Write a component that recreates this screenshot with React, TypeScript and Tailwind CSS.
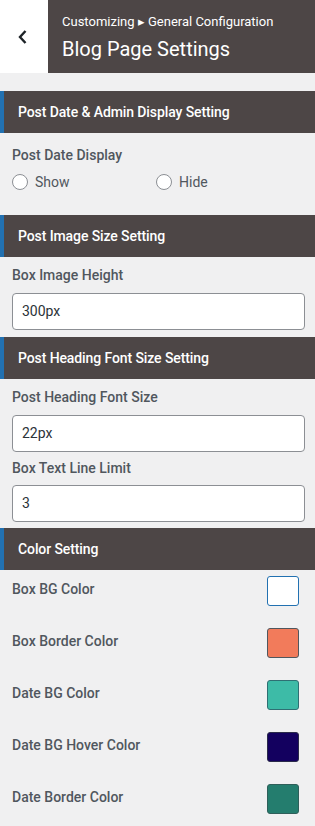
import React from "react";

const font = { fontFamily: "Roboto, 'Noto Sans', sans-serif" };

function SectionHeader({ title }: { title: string }) {
  return (
    <div className="h-[42px] flex items-center bg-[#4d4646] border-l-4 border-[#2271b1] pl-[14px]">
      <span className="text-white text-[14px] font-medium tracking-[-0.1px]">{title}</span>
    </div>
  );
}

function Label({ children, className = "" }: { children: React.ReactNode; className?: string }) {
  return <div className={`text-[14px] leading-[20px] font-medium text-[#50575e] ${className}`}>{children}</div>;
}

function Input({ value, className = "" }: { value: string; className?: string }) {
  return (
    <div className={`h-[37px] ml-[12px] mr-[10px] rounded-[4px] border border-[#8c8f94] bg-white flex items-center px-[9px] text-[14px] text-[#2c3338] ${className}`}>
      {value}
    </div>
  );
}

function Radio({ label }: { label: string }) {
  return (
    <div className="flex items-center gap-[7px]">
      <span className="w-[16px] h-[16px] rounded-full border border-[#8c8f94] bg-white" />
      <span className="text-[14px] text-[#50575e]">{label}</span>
    </div>
  );
}

function ColorRow({ label, color, border }: { label: string; color: string; border: string }) {
  return (
    <div className="h-[52px] flex items-start justify-between pl-[12px] pr-[16px] pt-[6px]">
      <Label className="mt-[3px]">{label}</Label>
      <span className="w-[32px] h-[30px] rounded-[3px] border" style={{ backgroundColor: color, borderColor: border }} />
    </div>
  );
}

export default function App() {
  return (
    <div className="w-[315px] h-[826px] bg-[#f0f0f1] overflow-hidden" style={font}>
      <div className="h-[73px] flex">
        <div className="w-[48px] bg-white flex items-center justify-center">
          <svg width="12" height="16" viewBox="0 0 12 16" className="ml-[-2px]">
            <path d="M8.5 2 L3 8 L8.5 14" fill="none" stroke="#1d2327" strokeWidth="2.4" />
          </svg>
        </div>
        <div className="flex-1 bg-[#4d4646] pl-[14px] pt-[13px]">
          <div className="text-[13px] leading-[18px] text-white">Customizing ▸ General Configuration</div>
          <div className="text-[20px] leading-[26px] text-white mt-[5px]">Blog Page Settings</div>
        </div>
      </div>

      <div className="mt-[18px]">
        <SectionHeader title="Post Date & Admin Display Setting" />
        <div className="pl-[12px] pt-[12px] pb-[23px]">
          <Label>Post Date Display</Label>
          <div className="flex mt-[7px] h-[20px] items-center">
            <div className="w-[144px]"><Radio label="Show" /></div>
            <Radio label="Hide" />
          </div>
        </div>
      </div>

      <SectionHeader title="Post Image Size Setting" />
      <div className="pt-[8px] pb-[7px]">
        <Label className="pl-[12px]">Box Image Height</Label>
        <Input value="300px" className="mt-[8px]" />
      </div>

      <SectionHeader title="Post Heading Font Size Setting" />
      <div className="pt-[8px] pb-[6px]">
        <Label className="pl-[12px]">Post Heading Font Size</Label>
        <Input value="22px" className="mt-[8px]" />
        <Label className="pl-[12px] mt-[6px]">Box Text Line Limit</Label>
        <Input value="3" className="mt-[7px]" />
      </div>

      <SectionHeader title="Color Setting" />
      <div>
        <ColorRow label="Box BG Color" color="#ffffff" border="#2271b1" />
        <ColorRow label="Box Border Color" color="#f27b5b" border="#50575e" />
        <ColorRow label="Date BG Color" color="#3dbba7" border="#2f6f73" />
        <ColorRow label="Date BG Hover Color" color="#13005f" border="#2a2a4a" />
        <ColorRow label="Date Border Color" color="#247d6e" border="#2f5f5a" />
      </div>
    </div>
  );
}
